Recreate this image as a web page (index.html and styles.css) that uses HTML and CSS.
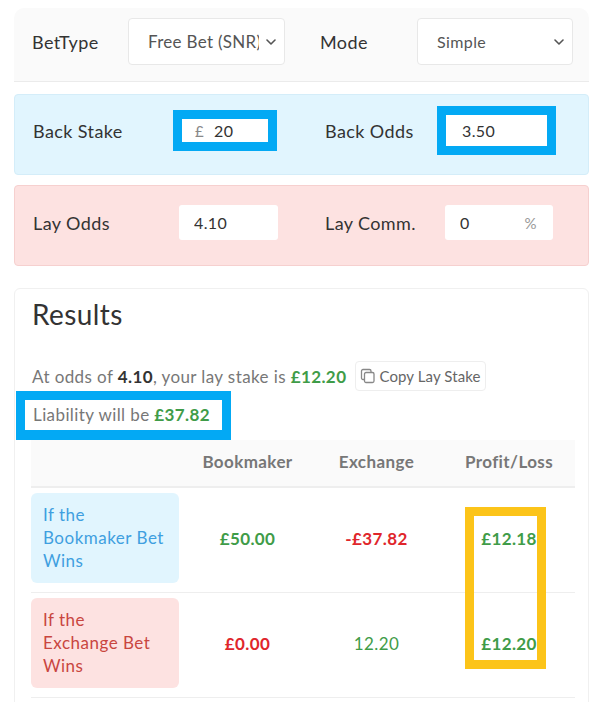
FILE: index.html
```html
<!DOCTYPE html>
<html lang="en">
<head>
  <meta charset="UTF-8">
  <title>Matched Betting Calculator</title>
  <link rel="stylesheet" href="styles.css">
</head>
<body>
<div class="page">

  <section class="panel panel-top">
    <div class="row row-top">
      <label class="lbl">BetType</label>
      <div class="select-wrap">
        <select class="select select-type"><option>Free Bet (SNR)</option></select>
        <svg class="chev" width="10" height="6" viewBox="0 0 10 6"><path d="M1 1l4 4 4-4" fill="none" stroke="#555" stroke-width="1.6" stroke-linecap="round" stroke-linejoin="round"/></svg>
      </div>
      <label class="lbl lbl-2">Mode</label>
      <div class="select-wrap">
        <select class="select"><option>Simple</option></select>
        <svg class="chev" width="10" height="6" viewBox="0 0 10 6"><path d="M1 1l4 4 4-4" fill="none" stroke="#555" stroke-width="1.6" stroke-linecap="round" stroke-linejoin="round"/></svg>
      </div>
    </div>
  </section>

  <section class="panel panel-back">
    <div class="row row-back">
      <label class="lbl">Back Stake</label>
      <div class="mark mark-stake">
        <div class="field"><span class="addon">£</span><input class="input" value="20"></div>
      </div>
      <label class="lbl lbl-2">Back Odds</label>
      <div class="mark mark-odds">
        <div class="field"><input class="input" value="3.50"></div>
      </div>
    </div>
  </section>

  <section class="panel panel-lay">
    <div class="row row-lay">
      <label class="lbl">Lay Odds</label>
      <div class="field field-lay"><input class="input" value="4.10"></div>
      <label class="lbl lbl-2">Lay Comm.</label>
      <div class="field field-lay"><input class="input" value="0"><span class="suffix">%</span></div>
    </div>
  </section>

  <section class="results">
    <h2>Results</h2>

    <div class="summary">
      <span>At odds of <b class="dark">4.10</b>, your lay stake is <b class="green">£12.20</b></span>
      <button class="copy-btn">
        <svg width="16" height="16" viewBox="0 0 16 16"><rect x="1.5" y="1.5" width="9.5" height="10" rx="1.5" fill="none" stroke="#888" stroke-width="1.3"/><rect x="4.5" y="4.5" width="9.5" height="10" rx="1.5" fill="#fff" stroke="#888" stroke-width="1.3"/></svg>
        Copy Lay Stake
      </button>
    </div>

    <div class="liability">Liability will be <b class="green">£37.82</b></div>

    <div class="table-wrap">
      <table class="outcomes">
        <thead>
          <tr>
            <th class="col-case"></th>
            <th class="col-bm">Bookmaker</th>
            <th class="col-ex">Exchange</th>
            <th class="col-pl">Profit/Loss</th>
          </tr>
        </thead>
        <tbody>
          <tr>
            <td class="case-cell"><div class="case case-back">If the<br>Bookmaker Bet<br>Wins</div></td>
            <td class="val green">£50.00</td>
            <td class="val red">-£37.82</td>
            <td class="val green">£12.18</td>
          </tr>
          <tr>
            <td class="case-cell"><div class="case case-lay">If the<br>Exchange Bet<br>Wins</div></td>
            <td class="val red">£0.00</td>
            <td class="val green-plain">12.20</td>
            <td class="val green">£12.20</td>
          </tr>
        </tbody>
      </table>
      <div class="pl-mark"></div>
    </div>
  </section>

</div>
</body>
</html>
```

FILE: styles.css
```css
body {
  margin: 0;
  background: #fff;
  font-family: Lato, "Open Sans", sans-serif;
  letter-spacing: 0.4px;
  color: #333;
}

.page {
  padding: 8px 11px 0 14px;
}

.panel {
  box-sizing: border-box;
}

.row {
  display: grid;
  align-items: center;
}

.lbl {
  font-size: 18px;
  color: #333;
}

/* top: bet type + mode */
.panel-top {
  background: #fafafa;
  border-bottom: 1px solid #ebebeb;
  border-radius: 10px 10px 0 0;
  padding: 10px 0 16px 18px;
}

.row-top {
  grid-template-columns: 96px 157px 132px 156px;
}

.row-top .lbl-2 { padding-left: 35px; }

.select-wrap {
  position: relative;
  height: 47px;
}

.select {
  appearance: none;
  -webkit-appearance: none;
  width: 100%;
  height: 47px;
  box-sizing: border-box;
  border: 1px solid #e8e8e8;
  border-radius: 4px;
  background: #fff;
  padding: 0 30px 0 19px;
  font-family: inherit;
  font-size: 16px;
  letter-spacing: 0.4px;
  color: #555;
}

.select-type {
  padding-right: 25px;
  font-size: 17px;
  letter-spacing: 0.3px;
}

.chev {
  position: absolute;
  right: 9px;
  top: 21px;
}

/* back */
.panel-back {
  margin-top: 12px;
  background: #e1f5fe;
  border: 1px solid #d4edf9;
  border-radius: 4px;
  padding: 11px 0 19px 18px;
}

.row-back {
  grid-template-columns: 140px 104px 160px 119px;
}

.row-back .lbl-2 { padding-left: 48px; }

.mark {
  border: 9px solid #03a9f4;
  background: #fff;
}

.mark-stake .field { height: 23px; }
.mark-odds .field { height: 31px; }

.field {
  display: flex;
  align-items: center;
  background: #fff;
  box-sizing: border-box;
}

.addon {
  color: #888;
  font-size: 15px;
  padding-left: 13px;
}

.input {
  border: none;
  outline: none;
  background: transparent;
  font-family: inherit;
  font-size: 16px;
  letter-spacing: 0.4px;
  color: #333;
  width: 100%;
  min-width: 0;
  padding: 0 0 0 16px;
}

.mark-stake .input { padding-left: 10px; }

/* lay */
.panel-lay {
  margin-top: 10px;
  background: #fde2e1;
  border: 1px solid #f6d0cf;
  border-radius: 4px;
  padding: 19px 0 25px 18px;
}

.row-lay {
  grid-template-columns: 146px 99px 167px 108px;
}

.row-lay .lbl-2 { padding-left: 47px; }

.field-lay {
  height: 35px;
  border-radius: 3px;
}

.field-lay .input { padding-left: 15px; }

.suffix {
  color: #999;
  font-size: 15px;
  padding-right: 16px;
}

/* results */
.results {
  margin-top: 22px;
  border: 1px solid #f0f0f0;
  border-radius: 6px;
  padding: 8px 15px 0 17px;
  height: 420px;
}

.results h2 {
  margin: 0;
  font-size: 28px;
  font-weight: 400;
  line-height: 34px;
  color: #333;
}

.summary {
  display: flex;
  align-items: center;
  margin-top: 30px;
  font-size: 17px;
  color: #777;
}

.dark { color: #333; font-weight: 700; }
.green { color: #3f9c48; font-weight: 700; }
.red { color: #e0262b; font-weight: 700; }
.green-plain { color: #3f9c48; }

.copy-btn {
  display: flex;
  align-items: center;
  gap: 3px;
  margin-left: 9px;
  height: 30px;
  width: 131px;
  padding: 0 4px;
  border: 1px solid #eee;
  border-radius: 4px;
  background: #fff;
  font-family: inherit;
  font-size: 15px;
  letter-spacing: 0.1px;
  color: #666;
  white-space: nowrap;
}

.liability {
  width: 189px;
  height: 30px;
  line-height: 30px;
  margin-left: -16px;
  padding-left: 8px;
  box-sizing: content-box;
  border: 9px solid #03a9f4;
  border-bottom-width: 10px;
  font-size: 17px;
  color: #777;
  background: #fff;
}

.table-wrap {
  position: relative;
  margin-left: -1px;
  width: 544px;
}

.outcomes {
  width: 544px;
  border-collapse: collapse;
  table-layout: fixed;
}

.col-case { width: 154px; }
.col-bm { width: 125px; }
.col-ex { width: 133px; }
.col-pl { width: 132px; }

.outcomes th {
  height: 42px;
  background: #fafafa;
  border-bottom: 2px solid #eee;
  font-size: 17px;
  font-weight: 700;
  color: #777;
  padding: 0 0 4px;
}

.outcomes td {
  border-bottom: 1px solid #eee;
  text-align: center;
  font-size: 17px;
  padding: 0 0 4px;
}

.outcomes td.case-cell {
  padding: 5px 6px 9px 0;
  text-align: left;
}

.case {
  height: 90px;
  box-sizing: border-box;
  border-radius: 6px;
  padding: 10px 0 0 12px;
  font-size: 17px;
  line-height: 23px;
  letter-spacing: 0.5px;
}

.case-back { background: #e1f5fe; color: #3f9fe0; }
.case-lay { background: #fde2e1; color: #c9463f; }

.pl-mark {
  position: absolute;
  left: 434px;
  top: 67px;
  width: 63px;
  height: 144px;
  border: 9px solid #fcc419;
}
```
